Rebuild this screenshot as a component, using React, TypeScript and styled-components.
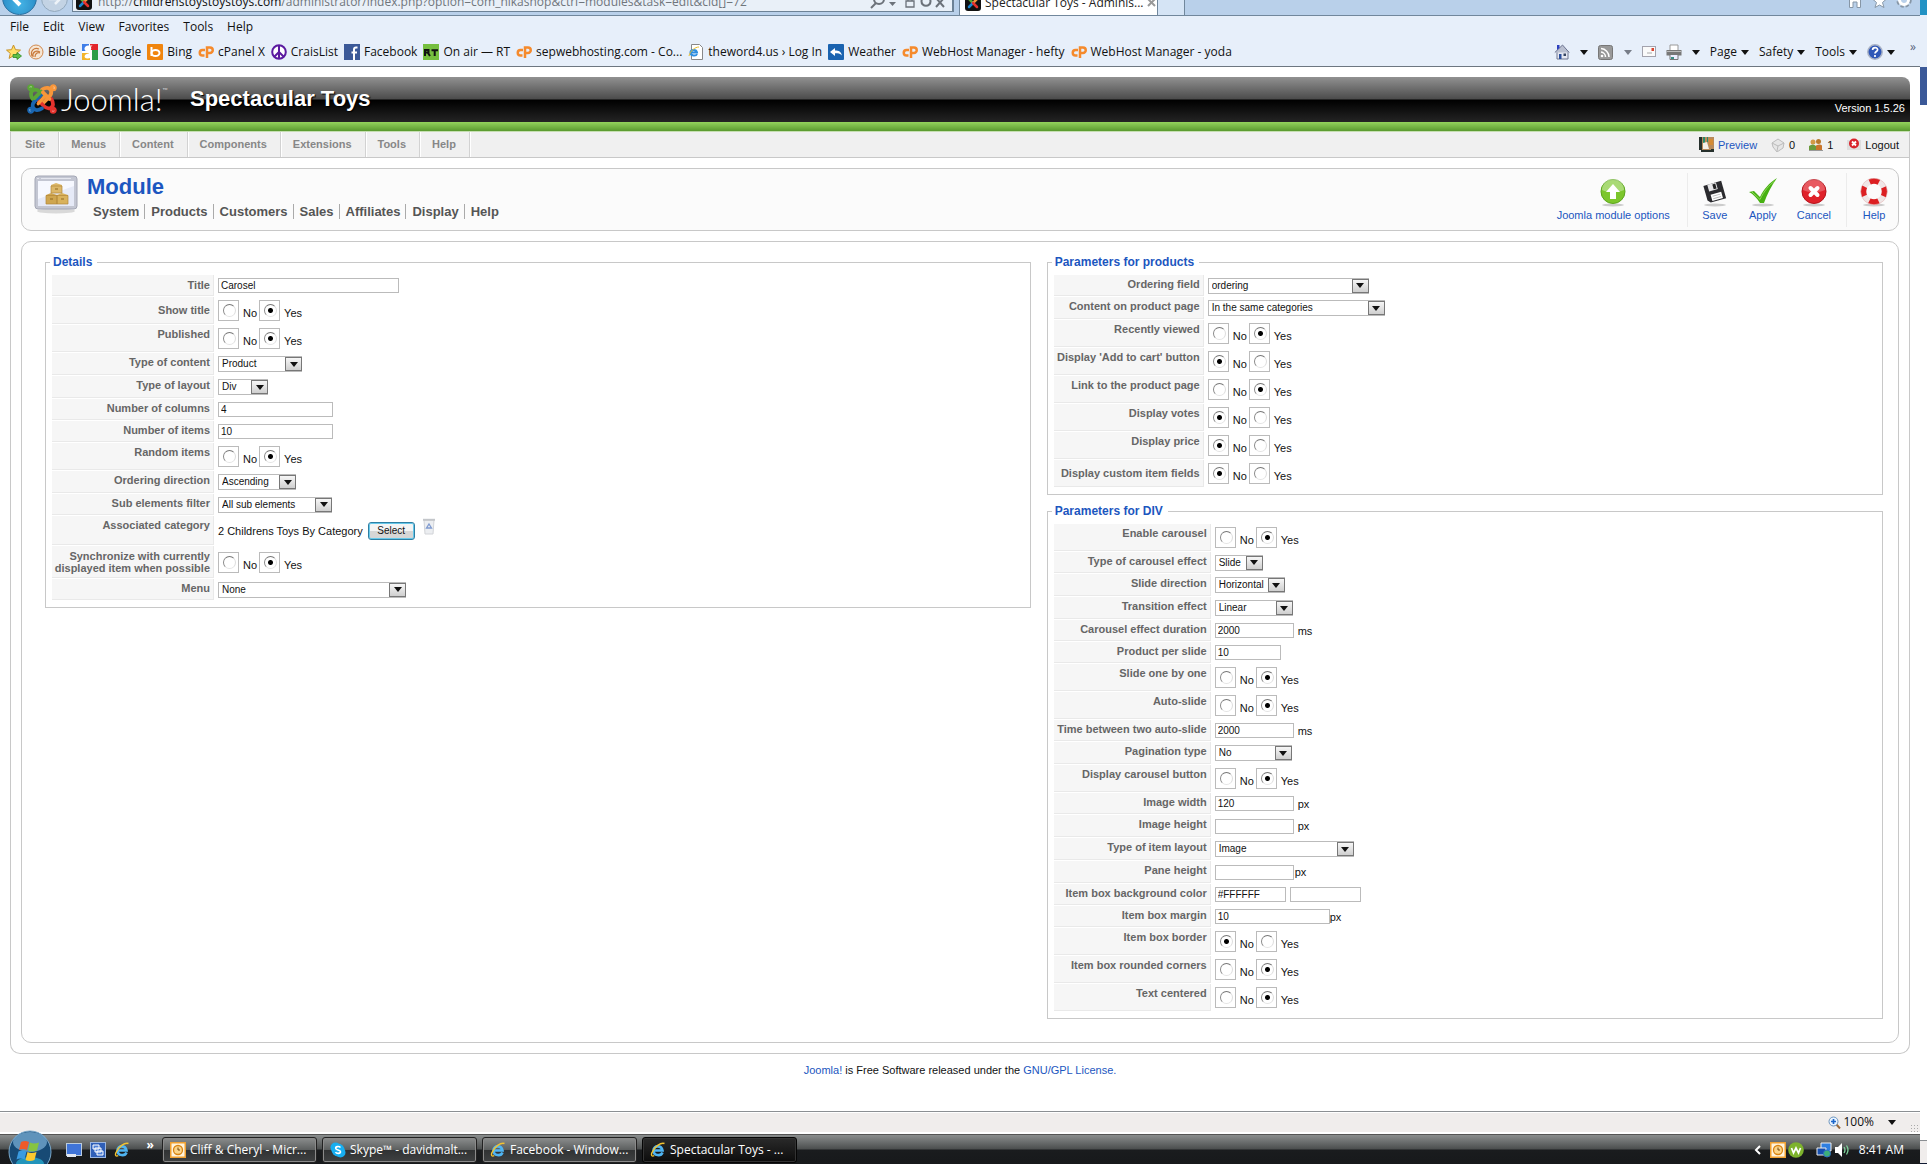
import React, { useId } from 'react';
import styled, { createGlobalStyle, css } from 'styled-components';

const ui = '"Open Sans", "Noto Sans", sans-serif';
const body = '"Liberation Sans", Arial, sans-serif';
const line = '#c8c8c8';
const blue = '#1c56c0';

const Global = createGlobalStyle`
  * { box-sizing: border-box; }
  body { margin: 0; background: #fff; font: 11px/14px ${body}; color: #111; }
  a { color: ${blue}; text-decoration: none; }
  svg { display: block; flex: none; }
`;

/* ---------- shell ---------- */
const Desktop = styled.div`
  display: flex;
  min-height: 100vh;
`;
const Browser = styled.div`
  flex: 1;
  min-width: 0;
  display: flex;
  flex-direction: column;
`;
const SecondScreen = styled.div`
  width: 7px;
  display: flex;
  flex-direction: column;
  background: #fff;
`;
const Sliver = styled.div<{ $h?: number; $bg: string }>`
  ${p => (p.$h ? css`height: ${p.$h}px;` : css`flex: 1;`)}
  background: ${p => p.$bg};
`;

/* ---------- browser chrome ---------- */
const AddressStrip = styled.div`
  height: 16px;
  overflow: hidden;
  display: flex;
  align-items: flex-end;
  background: #b9d0ea;
  border-bottom: 1px solid #71879c;
  padding-left: 2px;
  font: 12px/18px ${ui};
`;
const RoundButton = styled.button<{ $size: number; $on?: boolean }>`
  flex: none;
  width: ${p => p.$size}px;
  height: ${p => p.$size}px;
  margin: 0 ${p => (p.$on ? 4 : 4)}px ${p => (p.$on ? 0 : 3)}px 0;
  border: 1px solid ${p => (p.$on ? '#2a6f9f' : '#93a9bd')};
  border-radius: 50%;
  background: ${p => (p.$on ? 'radial-gradient(circle at 50% 70%, #45b4e6, #1c77b6)' : '#c3d3e4')};
  color: #fff;
  padding: 0;
  display: grid;
  place-items: center;
`;
const Address = styled.div`
  flex: none;
  width: 882px;
  height: 21px;
  margin-bottom: 3px;
  display: flex;
  align-items: center;
  gap: 6px;
  padding: 0 6px 0 3px;
  background: #e9f0f8;
  border: 1px solid #6d8296;
  border-width: 1px 2px 1px 1px;
  color: #70767c;
`;
const Url = styled.span`
  flex: 1;
  white-space: nowrap;
  b { font-weight: 400; color: #111; }
`;
const Tab = styled.div`
  flex: none;
  width: 199px;
  height: 26px;
  margin-left: 5px;
  padding: 0 7px 0 5px;
  display: flex;
  align-items: center;
  gap: 4px;
  background: #fff;
  border: 1px solid #71879c;
  border-bottom: 0;
  color: #222;
  span { flex: 1; white-space: nowrap; }
`;
const NewTab = styled.button`
  flex: none;
  width: 27px;
  height: 26px;
  border: 1px solid #71879c;
  border-width: 1px 1px 0 0;
  background: #d5e4f5;
`;
const ChromeIcons = styled.div`
  margin-left: auto;
  display: flex;
  gap: 9px;
  padding-right: 8px;
  margin-bottom: 7px;
`;
const ChromeBars = styled.div`
  background: #e7effa;
  border-bottom: 1px solid #6d7680;
  font: 12px/18px ${ui};
  color: #111;
  height: 51px;
`;
const MenuRow = styled.nav`
  display: flex;
  gap: 14px;
  padding: 2px 10px 5px;
`;
const PlainButton = styled.button`
  border: 0;
  padding: 0;
  background: none;
  font: inherit;
  color: inherit;
  display: flex;
  align-items: center;
  gap: 4px;
  white-space: nowrap;
`;
const BookmarkRow = styled.div`
  display: flex;
  align-items: center;
  height: 22px;
  padding: 0 4px 0 6px;
  gap: 6px;
`;
const Bookmark = styled.a`
  display: flex;
  align-items: center;
  gap: 4px;
  color: #111;
  white-space: nowrap;
`;
const CommandBar = styled.div`
  margin-left: auto;
  display: flex;
  align-items: center;
  gap: 10px;
`;
const More = styled.span`
  color: #555f7a;
  align-self: flex-start;
  line-height: 8px;
  padding-left: 5px;
`;
const Caret = styled.span<{ $dim?: boolean; $far?: boolean }>`
  border: 4px solid transparent;
  border-top: 5px solid ${p => (p.$dim ? '#777d88' : '#111')};
  border-bottom: 0;
  margin-left: ${p => (p.$far ? 6 : 0)}px;
`;

/* ---------- Joomla frame ---------- */
const PageArea = styled.main`
  flex: 1;
  padding: 10px 10px 0;
`;
const Header = styled.header`
  height: 54px;
  display: flex;
  align-items: center;
  padding: 0 5px 11px 17px;
  border-radius: 8px 8px 0 0;
  background:
    linear-gradient(#93d35c, #5a9a2f) bottom / 100% 9px no-repeat,
    linear-gradient(#919191 0, #4c4c4c 22px, #000 23px, #242424 45px);
  color: #fff;
`;
const Wordmark = styled.span`
  font: 300 31px/32px Lato, ${body};
  margin-left: 4px;
  width: 129px;
  display: flex;
  sup { font-size: 7px; line-height: 14px; }
`;
const SiteName = styled.h1`
  margin: 0;
  font: bold 22px/26px ${body};
  text-shadow: 1px 1px 1px #000;
`;
const Version = styled.span`
  margin-left: auto;
  padding-top: 18px;
`;
const Frame = styled.div`
  border: 1px solid ${line};
  border-top: 1px solid #c6dfb2;
  border-radius: 0 0 10px 10px;
`;
const MenuBar = styled.nav`
  display: flex;
  align-items: center;
  height: 26px;
  background: #f0f0f0;
  border-bottom: 1px solid ${line};
`;
const MenuLink = styled.a`
  padding: 6px 13px 6px 12px;
  line-height: 13px;
  font-weight: bold;
  color: #878787;
  border-right: 1px solid #d2d2d2;
  box-shadow: 1px 0 #fff;
  &:first-child { padding-left: 14px; }
`;
const StatusLinks = styled.div`
  margin-left: auto;
  display: flex;
  gap: 14px;
  padding-right: 10px;
`;
const StatusLink = styled.a<{ $dark?: boolean }>`
  display: flex;
  align-items: center;
  gap: 4px;
  ${p => p.$dark && css`color: #111;`}
`;
const Inner = styled.div`
  padding: 10px;
  display: grid;
  gap: 10px;
`;
const Panel = styled.section`
  border: 1px solid ${line};
  border-radius: 10px;
`;
const TitlePanel = styled(Panel)`
  background: #fbfbfb;
  height: 63px;
  display: flex;
  padding: 4px 0 0 12px;
`;
const Heading = styled.div`
  margin-left: 9px;
  h2 { margin: 0; font: bold 22px/27px ${body}; color: ${blue}; }
`;
const SubMenu = styled.nav`
  display: flex;
  padding: 4px 0 0 0;
`;
const SubLink = styled.a`
  font: bold 13px/15px ${body};
  color: #555;
  padding: 0 5px 0 6px;
  border-right: 1px solid #aaa;
  &:last-child { border: 0; }
`;
const Tools = styled.div`
  margin-left: auto;
  display: flex;
  align-items: flex-start;
`;
const ToolGroup = styled.div`
  display: flex;
  height: 54px;
  padding: 5px 5px 0 3px;
  & + & { border-left: 1px solid #ececec; }
  &:first-child { padding-right: 7px; }
  &:last-child { padding-right: 0; }
`;
const Tool = styled.button`
  border: 0;
  background: none;
  padding: 0 10px;
  font: 11px/14px ${body};
  color: ${blue};
  display: grid;
  justify-items: center;
  align-content: start;
  gap: 1px;
`;
const Columns = styled(Panel)`
  display: grid;
  grid-template-columns: 541fr 459fr;
  gap: 16px;
  align-items: start;
  padding: 13px 15px 23px 23px;
`;
const Stack = styled.div`
  display: grid;
  gap: 9px;
`;

/* ---------- forms ---------- */
const Group = styled.fieldset`
  margin: 0;
  min-width: 0;
  border: 1px solid ${line};
  padding: 6px 6px 7px;
`;
const Legend = styled.legend`
  padding: 0 5px 0 3px;
  margin-left: -2px;
  font: bold 12px/14px ${body};
  color: ${blue};
`;
const Rows = styled.div`
  display: grid;
  gap: 1px;
`;
const Row = styled.div<{ $h: number; $label: number }>`
  display: grid;
  grid-template-columns: ${p => p.$label}px 1fr;
  column-gap: 4px;
  height: ${p => p.$h}px;
`;
const Key = styled.label<{ $mid?: boolean }>`
  display: flex;
  align-items: ${p => (p.$mid ? 'center' : 'flex-start')};
  justify-content: flex-end;
  text-align: right;
  padding: ${p => (p.$mid ? 0 : 3)}px 3px 0 0;
  font: bold 11px/12px ${body};
  color: #666;
  background: #f6f6f6;
  border: solid #e9e9e9;
  border-width: 0 1px 1px 0;
`;
const Value = styled.div<{ $gap: number }>`
  display: flex;
  align-items: center;
  gap: ${p => p.$gap}px;
`;
const Box = styled.input<{ $w: number }>`
  width: ${p => p.$w}px;
  height: 15px;
  border: 1px solid #bbb;
  padding: 0 2px;
  background: #fff;
  font: 10px/13px ${body};
  color: #111;
`;
const SelectWrap = styled.span<{ $w: number }>`
  position: relative;
  width: ${p => p.$w}px;
  height: 16px;
  display: flex;
  select {
    appearance: none;
    width: 100%;
    border: 1px solid #bbb;
    border-radius: 0;
    background: #fff;
    padding: 0 0 0 3px;
    font: 10px/14px ${body};
    color: #111;
  }
`;
const DropArrow = styled.span`
  position: absolute;
  right: 0;
  top: 1px;
  width: 17px;
  height: 14px;
  border: 1px solid #777;
  background: linear-gradient(#f6f6f6, #cfcfcf);
  display: grid;
  place-items: center;
  pointer-events: none;
`;
const RadioLabel = styled.label`
  display: flex;
  align-items: flex-end;
  gap: 4px;
  line-height: 16px;
`;
const Radio = styled.input`
  appearance: none;
  margin: 0;
  width: 21px;
  height: 21px;
  border: 1px solid #bbb;
  background: #fff;
  display: grid;
  padding: 3px 0 0 4px;
  &::before {
    content: '';
    width: 11px;
    height: 11px;
    border-radius: 50%;
    border: 1px solid;
    border-color: #777 #ddd #e4e4e4 #888;
  }
  &:checked::before { background: radial-gradient(circle, #000 2px, #fff 3px); }
`;
const PickButton = styled.button`
  height: 18px;
  width: 47px;
  padding: 0;
  border: 1px solid #2f7fa3;
  border-radius: 3px;
  box-shadow: inset 0 0 0 1px #66c8ea;
  background: linear-gradient(#f4f4f4 50%, #d6d6d6 50%);
  font: 10px/14px ${body};
  color: #111;
`;
const Trash = styled.button`
  border: 0;
  padding: 0 0 8px 3px;
  background: none;
`;
const FootNote = styled.footer`
  text-align: center;
  padding: 9px 0 0;
`;

/* ---------- status bar and taskbar ---------- */
const StatusBar = styled.div`
  height: 23px;
  border-top: 1px solid #8b8f93;
  border-bottom: 2px solid #fff;
  box-shadow: inset 0 1px #fff;
  background: #f0edec;
  display: flex;
  align-items: center;
  justify-content: flex-end;
  gap: 14px;
  padding-right: 2px;
  font: 12px/18px ${ui};
`;
const Zoom = styled(PlainButton)`
  gap: 2px;
`;
const Grip = styled.span`
  width: 8px;
  height: 8px;
  align-self: flex-end;
  background: radial-gradient(circle, #aaa 1px, transparent 1px) 0 0 / 3px 3px;
`;
const Taskbar = styled.div`
  height: 30px;
  display: flex;
  align-items: center;
  background: linear-gradient(#8a8d8d 0, #4b4e4e 14px, #1a1c1e 15px, #17191b);
  border-top: 1px solid #555;
  color: #fff;
  font: 12px/18px ${ui};
  padding: 0 16px 0 8px;
`;
const StartButton = styled.button`
  border: 0;
  padding: 0;
  background: none;
  align-self: flex-end;
  display: flex;
  align-items: flex-start;
  height: 34px;
  overflow: hidden;
`;
const QuickLaunch = styled.div`
  display: flex;
  align-items: center;
  gap: 8px;
  margin: 0 8px 0 14px;
  width: 88px;
`;
const Chevrons = styled.span`
  margin: -10px 0 0 auto;
  font-weight: bold;
`;
const TaskList = styled.div`
  display: flex;
  gap: 5px;
`;
const Task = styled.button<{ $on?: boolean }>`
  width: 155px;
  height: 26px;
  display: flex;
  align-items: center;
  gap: 4px;
  padding: 0 0 0 7px;
  border: 1px solid ${p => (p.$on ? '#050505' : '#222')};
  border-radius: 3px;
  box-shadow: inset 0 0 0 1px ${p => (p.$on ? '#333' : '#8a8a8a')};
  background: ${p => (p.$on ? 'linear-gradient(#2a2a2a, #0c0c0c)' : 'linear-gradient(#8b8d8d, #5b5e5e 50%, #303233 50%, #3f4142)')};
  color: #fff;
  font: 12px/18px ${ui};
  white-space: nowrap;
`;
const Tray = styled.div`
  margin-left: auto;
  display: flex;
  align-items: center;
  gap: 2px;
  span { margin-left: 7px; }
`;

/* ---------- drawings ---------- */
const JoomlaMark = () => (
  <svg width="30" height="30" viewBox="0 0 32 32" fill="none" strokeLinecap="round">
    {[
      ['#5ba637', 0],
      ['#f8963a', 90],
      ['#e5322d', 180],
      ['#1a66b0', 270],
    ].map(([c, r]) => (
      <g key={r} transform={`rotate(${r} 16 16)`} stroke={c as string}>
        <path d="M6 16C3.500 12 3.500 8 7 6.500C10 5.300 12 6.500 14 8.500L21 15.500" strokeWidth="4" />
        <circle cx="4" cy="4" r="2" fill={c as string} strokeWidth="3.500" />
        <path d="M3 3.200A2 2 0 0 1 5 3" stroke="#fff" strokeOpacity=".5" strokeWidth="1" />
      </g>
    ))}
    <path d="M8 15L15 8" stroke="#5ba637" strokeWidth="4" />
    <path d="M12 21L20 12" stroke="#f8963a" strokeWidth="3.500" />
    <path d="M24 16L17 9" stroke="#f8963a" strokeWidth="4" />
  </svg>
);
const Favicon = () => (
  <svg width="16" height="16" viewBox="0 0 16 16">
    <rect width="16" height="16" rx="3" fill="#111" />
    <g strokeWidth="2.500" strokeLinecap="round">
      <path d="M4 4l4 4" stroke="#5ba637" /><path d="M12 4l-4 4" stroke="#f8963a" />
      <path d="M4 12l4-4" stroke="#1a86d0" /><path d="M12 12l-4-4" stroke="#e5322d" />
    </g>
  </svg>
);
const I = ({ children, w = 16, h = 16, box }: { children: React.ReactNode; w?: number; h?: number; box?: string }) => (
  <svg width={w} height={h} viewBox={box ?? `0 0 ${w} ${h}`}>{children}</svg>
);
const CP = () => (
  <I>
    <g fill="none" stroke="#f58a2c" strokeWidth="2.500">
      <path d="M7 6H4.500a2.700 2.700 0 0 0 0 5.500H6.500" />
      <path d="M9 14V3.500h3a2.500 2.500 0 0 1 0 5.500H10" />
    </g>
  </I>
);
const StarIcon = () => (
  <I>
    <path d="M7.500 1l2 4.700 5 .4-3.800 3.300 1.200 5-4.400-2.700-4.400 2.700 1.200-5L.5 6.100l5-.4z" fill="#ffe067" stroke="#c9922a" />
    <path d="M7 10.500h4V8.500l4.500 3.500-4.500 3.500v-2H7z" fill="#5fc04a" stroke="#2e8c24" strokeWidth=".8" />
  </I>
);
const BibleIcon = () => (
  <I><circle cx="8" cy="8" r="7" fill="#f6e6d4" stroke="#d0894f" /><path d="M4 12C2 7 6 3 11 5M5 13C4 8 8 6 12 8M7 13c0-3 2-5 5-4" fill="none" stroke="#c97a3c" strokeWidth="1.200" /></I>
);
const GoogleIcon = () => (
  <I>
    <rect width="16" height="16" fill="#fff" /><path d="M8 0h8v6H8z" fill="#e3242b" /><path d="M10 6h6v10h-6z" fill="#2a9d48" />
    <path d="M0 0h7v7H0z" fill="#3f7ee8" /><path d="M0 9h8v7H0z" fill="#f3b42b" />
    <path d="M10.500 1.500H6.500C1 1.500 1.500 8 6 7.500c0 1.500 1 1.500 1 2-5 0-6 5-1.500 5 5.500 0 5.500-4 3-6-1.500-1.300-.5-1.500.3-2.500.9-1.200.4-2.800-.3-3.500h1z" fill="#fff" />
  </I>
);
const BingIcon = () => (
  <I><rect width="16" height="16" rx="1" fill="#f0850e" /><path d="M4.500 3v9" stroke="#fff" strokeWidth="2" /><ellipse cx="8.500" cy="9" rx="4" ry="3" fill="none" stroke="#fff" strokeWidth="2" /></I>
);
const PeaceIcon = () => (
  <I><g fill="none" stroke="#5b1aa0" strokeWidth="2"><circle cx="8" cy="8" r="6.800" fill="#fff" /><path d="M8 1v14M8 8l-5 5M8 8l5 5" /></g></I>
);
const FbIcon = () => (
  <I><rect width="16" height="16" fill="#3b5998" /><path d="M13.500 3.500h-1.500c-1.500 0-2 .8-2 2V16M7.500 8.500h5.500" fill="none" stroke="#fff" strokeWidth="2" /></I>
);
const RtIcon = () => (
  <I><rect width="16" height="16" fill="#76bf3f" /><path d="M2 12V6h3.500v2.500H2.500M5 9l2 3M8.500 6.200H15M11.700 6v6" fill="none" stroke="#111" strokeWidth="2" /></I>
);
const IeIcon = () => (
  <I>
    <path d="M12.500 10.500C11 14.500 3.500 14 3.500 8.500S11.500 3 12.500 8.500H4.500" fill="none" stroke="#4fb4f2" strokeWidth="2.600" />
    <path d="M14.500 1.500C11 0 4 5 1.800 11c-.8 2.300 0 3.800 2.400 2.700" fill="none" stroke="#f2c230" strokeWidth="1.400" />
  </I>
);
const DocIcon = () => (
  <I><path d="M3.500.5h8l3 3v12h-11z" fill="#fff" stroke="#888" /><path d="M9 10C8 12.500 2.500 12 2.500 8.500S8.500 5 9 8.500H3" fill="none" stroke="#2f8ee0" strokeWidth="2" /><path d="M11 3C7 3 2 7 1 12" fill="none" stroke="#e8c030" /></I>
);
const WeatherIcon = () => (
  <I><rect width="16" height="16" rx="1" fill="#1a63b0" /><path d="M2 8l5-4v2.500c4 0 6 1 7 5-2-2-4-2.200-7-2.200V12z" fill="#fff" /></I>
);
const HomeIcon = () => (
  <I>
    <path d="M3 7h11v8H3z" fill="#e6e8f2" stroke="#6f7790" /><path d="M.8 8.500L8.500 1l6.700 7.500" fill="#b9bfd0" stroke="#6c7390" />
    <path d="M3 1h2.500v3L3 6z" fill="#2b3fbf" /><path d="M5 10h2.500v5H5z" fill="#2a4f9d" /><path d="M9.500 9.500H12V12H9.500z" fill="#34435f" />
  </I>
);
const RssIcon = () => (
  <I><rect x=".5" y="1.500" width="14" height="14" rx="2" fill="#999" stroke="#777" /><circle cx="4" cy="12" r="1.300" fill="#fff" /><path d="M3 8a5 5 0 0 1 4.500 5M3 4.500A8.500 8.500 0 0 1 11 13" fill="none" stroke="#fff" strokeWidth="1.500" /></I>
);
const MailIcon = () => (
  <I w={14} h={12}><rect x=".5" y=".5" width="13" height="10" fill="#fafafa" stroke="#a3a3ad" /><path d="M9.500 2H12v3H9.500z" fill="#d9442f" /><path d="M5 7h5" stroke="#aaa" /></I>
);
const PrinterIcon = () => (
  <I><path d="M4 1h8v6H4z" fill="#fff" stroke="#999" /><path d="M.5 6h15v5.500H.5z" fill="#777" /><path d="M1 7h14v1H1z" fill="#bbb" /><path d="M4 10.500h8v5H4z" fill="#eef" stroke="#777" /><path d="M5 13h3v2H5z" fill="#3a8f86" /></I>
);
const HelpIcon = () => (
  <I><circle cx="8" cy="8" r="7.200" fill="#2f57b7" stroke="#aab3c6" strokeWidth="1.500" /><path d="M5.600 6c0-3.200 5-3 5-.3C10.600 7.600 8 7.500 8 9.600M8 11v2" fill="none" stroke="#fff" strokeWidth="1.700" /></I>
);
const ModuleIcon = () => (
  <I w={44} h={42}>
    <ellipse cx="22" cy="38" rx="19" ry="2.500" fill="#d9d9d9" />
    <rect x="1" y="3" width="42" height="33" rx="3" fill="#c3c6d2" stroke="#a4a7b5" />
    <rect x="4" y="8" width="36" height="25" fill="#f6f8ff" /><path d="M4 26L40 13v20H4z" fill="#e6eaf7" />
    <path d="M3 5.500h2M7 5.500h30" stroke="#e4e6ee" />
    <path d="M17 12l5-2 6 2v8H17z" fill="#dcb769" /><path d="M12 22l5-2 6 2v9H12z" fill="#cfa650" /><path d="M23 22l5-2 6 2v9H23z" fill="#d9b25c" />
    <g stroke="#b3873a" strokeWidth=".7" fill="none"><path d="M17 13h11v7H17zM12 22.500h11V31H12zM23 22.500h11V31H23z" /></g>
    <path d="M21 16h3M16 26h3M27 26h3" stroke="#8f6820" />
  </I>
);
const shadow = <ellipse cx="14" cy="27" rx="11" ry="1.500" fill="#ccc" />;
const UpIcon = () => (
  <I w={28} h={29}>{shadow}<circle cx="14" cy="13.500" r="12" fill="#7cc62c" stroke="#5ba51d" /><path d="M3 12a11 11 0 0 1 22 0c-6 3-16 3-22 0z" fill="#fff" opacity=".35" /><path d="M14 6l7 8h-4v7h-6v-7H7z" fill="#fff" /></I>
);
const SaveIcon = () => (
  <I w={28} h={29}>{shadow}<g transform="rotate(-16 14 14)"><path d="M4.500 5H23v18H7l-2.500-3z" fill="#2b2b2f" /><path d="M8.500 5h9v7h-9z" fill="#e6e6e8" /><path d="M13.500 6h3v5h-3z" fill="#222" /><path d="M9 15.500h11V22H9z" fill="#fff" /><path d="M10.500 17.500h8M10.500 20h8" stroke="#bbb" /></g></I>
);
const ApplyIcon = () => (
  <I w={28} h={29}>{shadow}<path d="M0 14l5-1 6 6C15 11 20 5 28 0c-6 8-10 17-13 25h-4C8 20 4 16 0 14z" fill="#47b112" /><path d="M3 14l8 7.500C15 13 20 7 26 3" fill="none" stroke="#8fd65a" /></I>
);
const CancelIcon = () => (
  <I w={28} h={29}>{shadow}<circle cx="14" cy="13.500" r="12" fill="#e0222b" stroke="#b5131b" /><path d="M3 12a11 11 0 0 1 22 0c-6 3-16 3-22 0z" fill="#fff" opacity=".25" /><path d="M10.500 10l7 7M17.500 10l-7 7" stroke="#fff" strokeWidth="4" strokeLinecap="round" /></I>
);
const LifeIcon = () => (
  <I w={28} h={29}>{shadow}<circle cx="14" cy="13.500" r="10.500" fill="none" stroke="#efe6e6" strokeWidth="5.500" /><circle cx="14" cy="13.500" r="10.500" fill="none" stroke="#dc1f22" strokeWidth="5.500" strokeDasharray="9.500 6.993" strokeDashoffset="4.750" /><circle cx="14" cy="13.500" r="13.300" fill="none" stroke="#e3b6b6" strokeWidth=".6" /></I>
);
const TrashIcon = () => (
  <I w={12} h={17}><path d="M1 2h10l-1 14H2z" fill="#eceef1" stroke="#d2d4d8" /><path d="M0 .8h12v2H0z" fill="#c3c6ca" /><path d="M6 6l2.500 4h-5z" fill="none" stroke="#7f9bd0" strokeWidth="1.300" /></I>
);
const PreviewIcon = () => (
  <I w={15} h={15}><rect width="15" height="13" fill="#b98a5b" /><path d="M0 0h3v13H0zM12 12h3v3H2v-2h10z" fill="#26302c" /><path d="M4 0h2v6H4zM8 0h1v5H8z" fill="#2e8a6a" /><path d="M4 6l4-1 2 7H4z" fill="#f5f0e8" /><path d="M10 2h4v6h-4z" fill="#d58b35" /></I>
);
const NoteIcon = () => (
  <I w={14} h={14}><path d="M1 5l6-4 6 4-1 5-6 4-4-5z" fill="#e6e6e6" stroke="#bbb" /><path d="M1 5l6 3 6-3M7 8l-1 5" fill="none" stroke="#bbb" /></I>
);
const UsersIcon = () => (
  <I w={14} h={14}><circle cx="4" cy="4" r="2.500" fill="#d39a46" /><circle cx="9.500" cy="3.500" r="2.500" fill="#b87a2c" /><path d="M0 12V8q4-3 7 0v4z" fill="#6b9b3c" /><path d="M7 12V7.500q4-2 6 0V12z" fill="#c9752a" /><path d="M0 12h14v1H0z" fill="#999" /></I>
);
const OutIcon = () => (
  <I w={14} h={14}><path d="M0 2h14v10H0z" fill="#dedede" /><circle cx="7" cy="5.500" r="5" fill="#d8232b" /><path d="M5 3.500l4 4M9 3.500l-4 4" stroke="#fff" strokeWidth="1.800" /></I>
);
const Orb = () => (
  <I w={44} h={44}>
    <circle cx="22" cy="22" r="21" fill="#174a75" stroke="#7aa9cc" /><ellipse cx="22" cy="12" rx="17" ry="10" fill="#7fb2d8" opacity=".7" /><ellipse cx="22" cy="34" rx="14" ry="7" fill="#28b4d8" opacity=".7" />
    <path d="M13 12q4-2 8 0l-2 8q-4-2-8 0z" fill="#ee5a2a" /><path d="M22 12.500q4 2 9 0l-2 8q-5 2-9 0z" fill="#86c440" />
    <path d="M10.500 21.500q4-2 8 0l-2 8q-4-2-8 0z" fill="#3a9be0" /><path d="M19.500 22q4 2 9 0l-2 8q-5 2-9 0z" fill="#fbc92f" />
  </I>
);
const ScreenIcon = () => (
  <I><rect x=".5" y="1.500" width="15" height="12" fill="#3f74d8" stroke="#bcd" /><path d="M1 12h9v3H1z" fill="#dfe6f2" /></I>
);
const SwitchIcon = () => (
  <I><rect x=".5" y=".5" width="15" height="15" fill="#2f5fb8" stroke="#9bb6e0" /><path d="M3 3h6v4H3zM5 6h6v4H5zM7 9h6v4H7z" fill="#4f80d8" stroke="#fff" /></I>
);
const ClockIcon = () => (
  <I><rect width="16" height="16" fill="#f0a030" /><rect x="1.500" y="1.500" width="13" height="13" fill="#fff3dc" /><circle cx="8" cy="8" r="4.500" fill="#fbd58a" stroke="#d98310" strokeWidth="1.300" /><path d="M8 5.500V8h2" fill="none" stroke="#7a4a08" /></I>
);
const SkypeIcon = () => (
  <I><circle cx="5.500" cy="5.500" r="5" fill="#18aef0" /><circle cx="10.500" cy="10.500" r="5" fill="#18aef0" /><circle cx="8" cy="8" r="6.500" fill="#18aef0" /><path d="M10.500 5.500C9 4 5.500 4.300 5.700 6.300c.2 2 4.800 1.200 4.800 3.500 0 2-3.800 2-5 .3" fill="none" stroke="#fff" strokeWidth="1.600" /></I>
);
const WIcon = () => (
  <I><circle cx="8" cy="8" r="7.800" fill="#7db32d" /><path d="M3.500 6l2 5L8 6l2.500 5 2-5" fill="none" stroke="#fff" strokeWidth="1.700" /></I>
);
const NetIcon = () => (
  <I><path d="M5 1h10v8H5z" fill="#2f7fe0" stroke="#eee" /><path d="M1 6h9v7H1z" fill="#164fae" stroke="#eee" /><circle cx="11" cy="11.500" r="3.500" fill="#3eb07a" stroke="#2d6fc4" /></I>
);
const SoundIcon = () => (
  <I><path d="M1 5h3l4-4v14l-4-4H1z" fill="#fff" /><path d="M10 5q2 3 0 6M12.500 3.500q3 4.500 0 9" fill="none" stroke="#7fd49b" strokeWidth="1.300" /></I>
);
const MagIcon = () => (
  <I w={13} h={13}><path d="M8 8l4 4.500" stroke="#9a6a3a" strokeWidth="2" /><circle cx="5.500" cy="5.500" r="4.500" fill="#e8f3ff" stroke="#6d94bd" /><path d="M5.500 3v5M3 5.500h5" stroke="#1b66c9" strokeWidth="1.700" /></I>
);

/* ---------- form data ---------- */
type Field = {
  label: string;
  radio?: 'No' | 'Yes';
  select?: string;
  text?: string[];
  w?: number;
  unit?: string;
  gap?: number;
  mid?: boolean;
  h?: number;
  pick?: boolean;
};

const details: Field[] = [
  { label: 'Title', text: ['Carosel'], w: 181, mid: true },
  { label: 'Show title', radio: 'Yes', mid: true },
  { label: 'Published', radio: 'Yes' },
  { label: 'Type of content', select: 'Product', w: 84 },
  { label: 'Type of layout', select: 'Div', w: 50 },
  { label: 'Number of columns', text: ['4'], w: 115 },
  { label: 'Number of items', text: ['10'], w: 115 },
  { label: 'Random items', radio: 'Yes' },
  { label: 'Ordering direction', select: 'Ascending', w: 78 },
  { label: 'Sub elements filter', select: 'All sub elements', w: 114, h: 21 },
  { label: 'Associated category', pick: true, gap: 5, h: 29 },
  { label: 'Synchronize with currently displayed item when possible', radio: 'Yes', mid: true, h: 32 },
  { label: 'Menu', select: 'None', w: 188, h: 21 },
];
const products: Field[] = [
  { label: 'Ordering field', select: 'ordering', w: 161, h: 21 },
  { label: 'Content on product page', select: 'In the same categories', w: 177 },
  { label: 'Recently viewed', radio: 'Yes' },
  { label: "Display 'Add to cart' button", radio: 'No' },
  { label: 'Link to the product page', radio: 'Yes' },
  { label: 'Display votes', radio: 'No' },
  { label: 'Display price', radio: 'No' },
  { label: 'Display custom item fields', radio: 'No', mid: true },
];
const carousel: Field[] = [
  { label: 'Enable carousel', radio: 'Yes' },
  { label: 'Type of carousel effect', select: 'Slide', w: 48, h: 21 },
  { label: 'Slide direction', select: 'Horizontal', w: 70 },
  { label: 'Transition effect', select: 'Linear', w: 78 },
  { label: 'Carousel effect duration', text: ['2000'], w: 79, unit: 'ms' },
  { label: 'Product per slide', text: ['10'], w: 66 },
  { label: 'Slide one by one', radio: 'Yes' },
  { label: 'Auto-slide', radio: 'Yes' },
  { label: 'Time between two auto-slide', text: ['2000'], w: 79, unit: 'ms' },
  { label: 'Pagination type', select: 'No', w: 77 },
  { label: 'Display carousel button', radio: 'Yes' },
  { label: 'Image width', text: ['120'], w: 79, unit: 'px' },
  { label: 'Image height', text: [''], w: 79, unit: 'px', h: 22 },
  { label: 'Type of item layout', select: 'Image', w: 139 },
  { label: 'Pane height', text: [''], w: 79, unit: 'px', gap: 1, h: 22 },
  { label: 'Item box background color', text: ['#FFFFFF', ''], w: 71 },
  { label: 'Item box margin', text: ['10'], w: 115, unit: 'px', gap: 0 },
  { label: 'Item box border', radio: 'No' },
  { label: 'Item box rounded corners', radio: 'Yes' },
  { label: 'Text centered', radio: 'Yes' },
];

function FieldRow({ f, labelWidth }: { f: Field; labelWidth: number }) {
  const id = useId();
  const h = f.h ?? (f.radio ? 27 : f.select ? 22 : 21);
  return (
    <Row $h={h} $label={labelWidth}>
      <Key as={f.radio ? 'span' : 'label'} id={`${id}-key`} htmlFor={f.radio ? undefined : id} $mid={f.mid}>{f.label}</Key>
      <Value $gap={f.gap ?? (f.radio ? 2 : 4)} role={f.radio ? 'radiogroup' : undefined} aria-labelledby={f.radio ? `${id}-key` : undefined}>
        {f.radio &&
          ['No', 'Yes'].map(v => (
            <RadioLabel key={v}>
              <Radio type="radio" name={id} defaultChecked={f.radio === v} />
              {v}
            </RadioLabel>
          ))}
        {f.select && (
          <SelectWrap $w={f.w!}>
            <select id={id} defaultValue={f.select}><option>{f.select}</option></select>
            <DropArrow><Caret /></DropArrow>
          </SelectWrap>
        )}
        {f.text?.map((t, i) => (
          <Box key={i} id={i ? undefined : id} aria-label={f.label} $w={f.w!} defaultValue={t} />
        ))}
        {f.unit}
        {f.pick && (
          <>
            2 Childrens Toys By Category
            <PickButton type="button" id={id}>Select</PickButton>
            <Trash type="button" aria-label="Remove category"><TrashIcon /></Trash>
          </>
        )}
      </Value>
    </Row>
  );
}
const FieldGroup = ({ title, fields, labelWidth }: { title: string; fields: Field[]; labelWidth: number }) => (
  <Group>
    <Legend>{title}</Legend>
    <Rows>{fields.map(f => <FieldRow key={f.label} f={f} labelWidth={labelWidth} />)}</Rows>
  </Group>
);

const bookmarks: [React.ReactNode, string][] = [
  [<BibleIcon />, 'Bible'], [<GoogleIcon />, 'Google'], [<BingIcon />, 'Bing'], [<CP />, 'cPanel X'],
  [<PeaceIcon />, 'CraisList'], [<FbIcon />, 'Facebook'], [<RtIcon />, 'On air — RT'],
  [<CP />, 'sepwebhosting.com - Co...'], [<DocIcon />, 'theword4.us › Log In'], [<WeatherIcon />, 'Weather'],
  [<CP />, 'WebHost Manager - hefty'], [<CP />, 'WebHost Manager - yoda'],
];

export default function App() {
  return (
    <Desktop>
      <Global />
      <Browser>
        <AddressStrip>
          <RoundButton $size={35} $on aria-label="Back">
            <svg width="22" height="22" viewBox="0 0 22 22"><path d="M19 11H5M11 4l-7 7 7 7" fill="none" stroke="#fff" strokeWidth="4" /></svg>
          </RoundButton>
          <RoundButton $size={27} aria-label="Forward">
            <svg width="16" height="16" viewBox="0 0 16 16"><path d="M2 8h11M8 3l5 5-5 5" fill="none" stroke="#eef3f8" strokeWidth="2.500" /></svg>
          </RoundButton>
          <Address>
            <Favicon />
            <Url>http://<b>childrenstoystoystoys.com</b>/administrator/index.php?option=com_hikashop&amp;ctrl=modules&amp;task=edit&amp;cid[]=72</Url>
            <svg width="76" height="18" viewBox="0 0 76 18" fill="none" stroke="#6c727a" strokeWidth="2">
              <circle cx="9" cy="6" r="5" /><path d="M6 10l-5 5" /><path d="M19 9h7l-3.500 4z" fill="#6c727a" stroke="none" />
              <path d="M36 8h8v6h-8zM38 8V5h4v3" strokeWidth="1.300" /><path d="M53 5a4.500 4.500 0 1 0 6 0" /><path d="M66 5l8 9M74 5l-8 9" />
            </svg>
          </Address>
          <Tab>
            <Favicon /><span>Spectacular Toys - Adminis...</span>
            <svg width="9" height="9" viewBox="0 0 9 9"><path d="M1 1l7 7M8 1L1 8" stroke="#999" strokeWidth="2" /></svg>
          </Tab>
          <NewTab aria-label="New tab" />
          <ChromeIcons>
            <svg width="16" height="15" viewBox="0 0 16 15"><path d="M2.500 6v8.500H6V9h4v5.500h3.500V6L8 1z" fill="#fff" stroke="#8796a6" /></svg>
            <svg width="15" height="15" viewBox="0 0 15 15"><path d="M7.500 1l2 4.500 5 .5-4 3.500L12 14.500 7.500 12 3 14.500l1.500-5L.5 6l5-.5z" fill="#fff" stroke="#8796a6" /></svg>
            <svg width="16" height="15" viewBox="0 0 16 15"><circle cx="8" cy="7" r="6" fill="none" stroke="#8796a6" strokeWidth="3.500" strokeDasharray="3 1.700" /><circle cx="8" cy="7" r="4.500" fill="#b9d0ea" stroke="#fff" strokeWidth="3" /></svg>
          </ChromeIcons>
        </AddressStrip>
        <ChromeBars>
          <MenuRow>
            {['File', 'Edit', 'View', 'Favorites', 'Tools', 'Help'].map(m => <PlainButton key={m}>{m}</PlainButton>)}
          </MenuRow>
          <BookmarkRow>
            <StarIcon />
            {bookmarks.map(([icon, name]) => <Bookmark key={name} href="#">{icon}{name}</Bookmark>)}
            <CommandBar>
              <PlainButton aria-label="Home"><HomeIcon /><Caret $far /></PlainButton>
              <PlainButton aria-label="Feeds"><RssIcon /><Caret $dim $far /></PlainButton>
              <PlainButton aria-label="Read mail"><MailIcon /></PlainButton>
              <PlainButton aria-label="Print"><PrinterIcon /><Caret $far /></PlainButton>
              {['Page', 'Safety', 'Tools'].map(m => <PlainButton key={m}>{m}<Caret /></PlainButton>)}
              <PlainButton aria-label="Help"><HelpIcon /><Caret /></PlainButton>
              <More>»</More>
            </CommandBar>
          </BookmarkRow>
        </ChromeBars>

        <PageArea>
          <Header>
            <JoomlaMark />
            <Wordmark>Joomla!<sup>™</sup></Wordmark>
            <SiteName>Spectacular Toys</SiteName>
            <Version>Version 1.5.26</Version>
          </Header>
          <Frame>
            <MenuBar>
              {['Site', 'Menus', 'Content', 'Components', 'Extensions', 'Tools', 'Help'].map(m => <MenuLink key={m} href="#">{m}</MenuLink>)}
              <StatusLinks>
                <StatusLink href="#"><PreviewIcon />Preview</StatusLink>
                <StatusLink href="#" $dark><NoteIcon />0</StatusLink>
                <StatusLink href="#" $dark><UsersIcon />1</StatusLink>
                <StatusLink href="#" $dark><OutIcon />Logout</StatusLink>
              </StatusLinks>
            </MenuBar>
            <Inner>
              <TitlePanel>
                <ModuleIcon />
                <Heading>
                  <h2>Module</h2>
                  <SubMenu>
                    {['System', 'Products', 'Customers', 'Sales', 'Affiliates', 'Display', 'Help'].map(m => <SubLink key={m} href="#">{m}</SubLink>)}
                  </SubMenu>
                </Heading>
                <Tools>
                  <ToolGroup><Tool><UpIcon />Joomla module options</Tool></ToolGroup>
                  <ToolGroup>
                    <Tool><SaveIcon />Save</Tool>
                    <Tool><ApplyIcon />Apply</Tool>
                    <Tool><CancelIcon />Cancel</Tool>
                  </ToolGroup>
                  <ToolGroup><Tool><LifeIcon />Help</Tool></ToolGroup>
                </Tools>
              </TitlePanel>
              <Columns>
                <FieldGroup title="Details" fields={details} labelWidth={162} />
                <Stack>
                  <FieldGroup title="Parameters for products" fields={products} labelWidth={150} />
                  <FieldGroup title="Parameters for DIV" fields={carousel} labelWidth={157} />
                </Stack>
              </Columns>
            </Inner>
          </Frame>
          <FootNote><a href="#">Joomla!</a> is Free Software released under the <a href="#">GNU/GPL License.</a></FootNote>
        </PageArea>

        <StatusBar>
          <Zoom><MagIcon />100%</Zoom>
          <PlainButton aria-label="Zoom level"><Caret /></PlainButton>
          <Grip />
        </StatusBar>
        <Taskbar>
          <StartButton aria-label="Start"><Orb /></StartButton>
          <QuickLaunch><ScreenIcon /><SwitchIcon /><IeIcon /><Chevrons>»</Chevrons></QuickLaunch>
          <TaskList>
            <Task><ClockIcon />Cliff &amp; Cheryl - Micr...</Task>
            <Task><SkypeIcon />Skype™ - davidmalt...</Task>
            <Task><IeIcon />Facebook - Window...</Task>
            <Task $on><IeIcon />Spectacular Toys - ...</Task>
          </TaskList>
          <Tray>
            <svg width="14" height="10" viewBox="0 0 14 10"><path d="M6 1L2 5l4 4" fill="none" stroke="#fff" strokeWidth="2" /></svg>
            <ClockIcon /><WIcon /><I w={8} h={8}><g /></I><NetIcon /><SoundIcon /><span>8:41 AM</span>
          </Tray>
        </Taskbar>
      </Browser>
      <SecondScreen>
        <Sliver $h={15} $bg="#2292c4" />
        <Sliver $h={52} $bg="#e7effa" />
        <Sliver $h={38} $bg="#3b5998" />
        <Sliver $bg="#fff" />
        <Sliver $h={1} $bg="#8b8f93" />
        <Sliver $h={22} $bg="#f0edec" />
        <Sliver $h={1} $bg="#101a33" />
      </SecondScreen>
    </Desktop>
  );
}
